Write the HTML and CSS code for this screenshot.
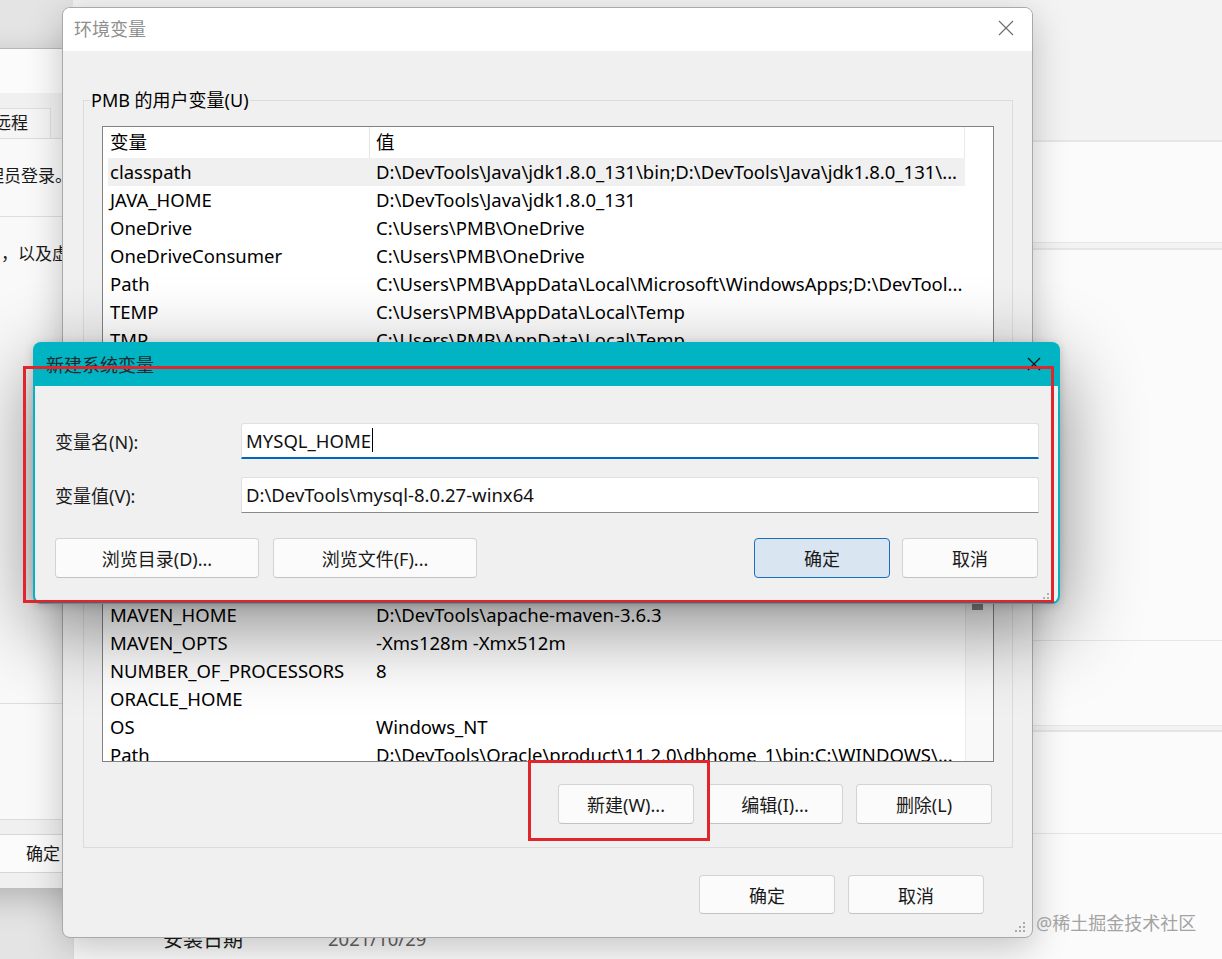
FILE: index.html
```html
<!DOCTYPE html>
<html lang="zh-CN">
<head>
<meta charset="utf-8">
<title>环境变量</title>
<link rel="stylesheet" href="styles.css">
</head>
<body>
<div class="settings">
  <div class="set-head"></div>
  <div class="set-card card-a"></div>
  <div class="set-card card-b"><div class="set-b1"></div></div>
  <div class="set-card card-c">
    <div class="set-c1"></div>
    <div class="spec">
      <div class="spec-row"></div>
      <div class="spec-row"></div>
      <div class="spec-row"><span class="spec-k">安装日期</span><span class="spec-v">2021/10/29</span></div>
    </div>
  </div>
</div>

<div class="sysprop">
  <div class="sp-title"></div>
  <div class="sp-body">
    <div class="sp-tabs"><span class="sp-tab">远程</span></div>
    <div class="sp-panel">
      <p class="sp-note">要进行大多数更改，你必须作为管理员登录。</p>
      <div class="sp-group">
        <p class="sp-text">视觉效果，处理器计划，内存使用，以及虚拟内存</p>
      </div>
    </div>
    <div class="sp-buttons"><span class="sp-btn">确定</span></div>
  </div>
</div>

<div class="env">
  <div class="env-title">
    <span class="env-title-text">环境变量</span>
    <svg class="env-close" width="16" height="16" viewBox="0 0 16 16"><path d="M1 1L15 15M15 1L1 15" stroke="#6b6b6b" stroke-width="1.1" fill="none"/></svg>
  </div>
  <div class="env-body">
    <div class="group g-user">
      <div class="legend">PMB 的用户变量(U)</div>
      <div class="list l-user">
        <div class="lv-main">
          <div class="lv-head"><span class="c1">变量</span><span class="c2">值</span></div>
          <div class="lv-row sel"><span class="c1">classpath</span><span class="c2">D:\DevTools\Java\jdk1.8.0_131\bin;D:\DevTools\Java\jdk1.8.0_131\...</span></div>
          <div class="lv-row"><span class="c1">JAVA_HOME</span><span class="c2">D:\DevTools\Java\jdk1.8.0_131</span></div>
          <div class="lv-row"><span class="c1">OneDrive</span><span class="c2">C:\Users\PMB\OneDrive</span></div>
          <div class="lv-row"><span class="c1">OneDriveConsumer</span><span class="c2">C:\Users\PMB\OneDrive</span></div>
          <div class="lv-row"><span class="c1">Path</span><span class="c2">C:\Users\PMB\AppData\Local\Microsoft\WindowsApps;D:\DevTool...</span></div>
          <div class="lv-row"><span class="c1">TEMP</span><span class="c2">C:\Users\PMB\AppData\Local\Temp</span></div>
          <div class="lv-row"><span class="c1">TMP</span><span class="c2">C:\Users\PMB\AppData\Local\Temp</span></div>
        </div>
        <div class="lv-side"></div>
      </div>
    </div>
    <div class="group g-sys">
      <div class="list l-sys">
        <div class="lv-main">
          <div class="lv-scrolled"></div>
          <div class="lv-row"><span class="c1">MAVEN_HOME</span><span class="c2">D:\DevTools\apache-maven-3.6.3</span></div>
          <div class="lv-row"><span class="c1">MAVEN_OPTS</span><span class="c2">-Xms128m -Xmx512m</span></div>
          <div class="lv-row"><span class="c1">NUMBER_OF_PROCESSORS</span><span class="c2">8</span></div>
          <div class="lv-row"><span class="c1">ORACLE_HOME</span><span class="c2"></span></div>
          <div class="lv-row"><span class="c1">OS</span><span class="c2">Windows_NT</span></div>
          <div class="lv-row"><span class="c1">Path</span><span class="c2">D:\DevTools\Oracle\product\11.2.0\dbhome_1\bin;C:\WINDOWS\...</span></div>
        </div>
        <div class="lv-side sb"><div class="thumb"></div></div>
      </div>
      <div class="btn-row">
        <span class="wbtn w136">新建(W)...</span>
        <span class="wbtn w136">编辑(I)...</span>
        <span class="wbtn w136">删除(L)</span>
      </div>
    </div>
    <div class="foot">
      <span class="wbtn w136 h39">确定</span>
      <span class="wbtn w136 h39">取消</span>
    </div>
  </div>
  <svg class="grip env-grip" width="12" height="12" viewBox="0 0 12 12"><g fill="#a9a9a9"><rect x="9" y="1" width="2" height="2"/><rect x="5" y="5" width="2" height="2"/><rect x="9" y="5" width="2" height="2"/><rect x="1" y="9" width="2" height="2"/><rect x="5" y="9" width="2" height="2"/><rect x="9" y="9" width="2" height="2"/></g></svg>
</div>

<div class="newvar">
  <div class="nv-title">
    <span class="nv-title-text">新建系统变量</span>
    <svg class="nv-close" width="14" height="14" viewBox="0 0 14 14"><path d="M1 1L13 13M13 1L1 13" stroke="#111" stroke-width="1.2" fill="none"/></svg>
  </div>
  <div class="nv-body">
    <div class="nv-row">
      <span class="nv-label">变量名(N):</span>
      <div class="nv-input focus"><span>MYSQL_HOME</span><span class="caret"></span></div>
    </div>
    <div class="nv-row">
      <span class="nv-label">变量值(V):</span>
      <div class="nv-input"><span>D:\DevTools\mysql-8.0.27-winx64</span></div>
    </div>
    <div class="nv-btns">
      <span class="wbtn w204">浏览目录(D)...</span>
      <span class="wbtn w204">浏览文件(F)...</span>
      <span class="nv-spacer"></span>
      <span class="wbtn w136 default">确定</span>
      <span class="wbtn w136">取消</span>
    </div>
  </div>
  <svg class="grip nv-grip" width="12" height="12" viewBox="0 0 12 12"><g fill="#b0b0b0"><rect x="9" y="1" width="2" height="2"/><rect x="5" y="5" width="2" height="2"/><rect x="9" y="5" width="2" height="2"/><rect x="1" y="9" width="2" height="2"/><rect x="5" y="9" width="2" height="2"/><rect x="9" y="9" width="2" height="2"/></g></svg>
</div>

<div class="mark mark-dialog"></div>
<div class="mark mark-btn"></div>

<div class="watermark">@稀土掘金技术社区</div>
</body>
</html>
```

FILE: styles.css
```css
* { box-sizing: border-box; }
html, body { margin: 0; padding: 0; }
body {
  width: 1222px;
  height: 959px;
  overflow: hidden;
  position: relative;
  background: #e4e4e4;
  font-family: "Noto Sans", "Noto Sans CJK SC", sans-serif;
  font-size: 18px;
  color: #000;
}
p { margin: 0; }

/* ---------- settings window behind ---------- */
.settings {
  position: absolute;
  left: 73px;
  top: 0;
  width: 1200px;
  height: 959px;
  background: #f3f3f3;
  display: flex;
  flex-direction: column;
}
.set-head { height: 140px; flex: none; }
.set-card {
  flex: none;
  background: #fbfbfb;
  border-top: 2px solid #e6e6e6;
  border-left: 1px solid #dedede;
}
.card-a { height: 103px; border-bottom: 1px solid #e6e6e6; }
.card-b { height: 478px; margin-top: 5px; border-bottom: 1px solid #e6e6e6; }
.set-b1 { height: 391px; border-bottom: 1px solid #e6e6e6; }
.card-c { flex: 1; margin-top: 4px; }
.set-c1 { height: 102px; border-bottom: 1px solid #e6e6e6; }
.spec { padding: 14px 0 0 89px; }
.spec-row { display: flex; align-items: center; height: 36px; }
.spec-k { width: 165px; color: #1b1b1b; font-size: 20px; }
.spec-v { color: #606060; font-size: 18.5px; }

/* ---------- system properties window behind (left) ---------- */
.sysprop {
  position: absolute;
  left: -303px;
  top: 48px;
  width: 420px;
  height: 840px;
  background: #f0f0f0;
  border-top: 1px solid #b8b8b8;
  box-shadow: 0 10px 30px rgba(0,0,0,0.22);
  font-size: 17px;
  color: #1a1a1a;
}
.sp-title { height: 44px; background: #fbfbfb; }
.sp-body { padding: 15px 0 14px 10px; }
.sp-tabs {
  display: flex;
  justify-content: flex-end;
  height: 30px;
  padding-right: 66px;
}
.sp-tab {
  height: 30px;
  line-height: 28px;
  padding: 0 22px;
  background: #f5f5f5;
  border: 1px solid #dedede;
  border-bottom: none;
  white-space: nowrap;
}
.sp-panel {
  height: 682px;
  background: #f9f9f9;
  border: 1px solid #dcdcdc;
  padding: 24px 0 0 24px;
}
.sp-note { line-height: 26px; white-space: nowrap; }
.sp-group {
  margin-top: 27px;
  margin-left: -4px;
  height: 488px;
  border-top: 1px solid #dedede;
  border-bottom: 1px solid #dedede;
  padding: 24px 0 0 18px;
}
.sp-text { line-height: 26px; white-space: nowrap; }
.sp-buttons {
  display: flex;
  gap: 12px;
  margin-top: 14px;
  padding-left: 268px;
}
.sp-btn {
  flex: none;
  width: 136px;
  height: 39px;
  line-height: 37px;
  text-align: center;
  background: #fbfbfb;
  border: 1px solid #d6d6d6;
  border-radius: 4px;
}

/* ---------- environment variables dialog ---------- */
.env {
  position: absolute;
  left: 62px;
  top: 7px;
  width: 971px;
  height: 931px;
  background: #f0f0f0;
  border: 1px solid #a9a9a9;
  border-radius: 8px;
  box-shadow: 0 10px 36px rgba(0,0,0,0.22);
  overflow: hidden;
}
.env-title {
  height: 43px;
  background: #fff;
  display: flex;
  align-items: center;
  padding: 0 0 4px 11px;
}
.env-title-text { color: #8f8f8f; font-size: 18px; flex: 1; }
.env-close { margin-right: 18px; }
.env-body { padding: 49px 19px 0 20px; }

.group {
  border: 1px solid #dcdcdc;
  padding: 0 18px 23px 18px;
}
.g-user { padding-bottom: 85px; }
.g-sys { margin-top: 6px; padding-top: 25px; }
.legend {
  width: fit-content;
  margin: -14px 0 0 -12px;
  height: 26px;
  line-height: 26px;
  padding: 0 1px;
  background: #f0f0f0;
  white-space: nowrap;
}
.list {
  margin-top: 13px;
  border: 1px solid #828282;
  background: #fff;
  display: flex;
  overflow: hidden;
  font-size: 18.5px;
}
.g-sys .list { margin-top: 0; }
.l-user { height: 241px; }
.l-sys { height: 277px; }
.lv-main { width: 862px; flex: none; padding-left: 5px; }
.lv-side { flex: 1; }
.lv-scrolled { height: 115px; }
.sb { background: #f9f9f9; border-left: 1px solid #ebebeb; padding: 30px 0 0 6px; }
.thumb { width: 11px; height: 94px; background: #878787; }
.lv-head { display: flex; height: 31px; line-height: 30px; background: #fff; }
.lv-head .c1 { border-right: 1px solid #e5e5e5; }
.lv-head .c2 { border-right: 1px solid #e9e9e9; }
.lv-row { display: flex; height: 28px; line-height: 28px; }
.lv-row.sel { background: #f0f0f0; }
.c1 { width: 262px; flex: none; padding-left: 2px; white-space: nowrap; overflow: hidden; }
.c2 { flex: 1; padding-left: 6px; white-space: nowrap; overflow: hidden; }

.btn-row {
  display: flex;
  justify-content: flex-end;
  gap: 13px;
  margin: 22px 2px 0 0;
}
.wbtn {
  flex: none;
  height: 40px;
  display: flex;
  align-items: center;
  justify-content: center;
  background: #fbfbfb;
  border: 1px solid #d3d3d3;
  border-bottom-color: #c2c2c2;
  border-radius: 4px;
  color: #1a1a1a;
  white-space: nowrap;
}
.w136 { width: 136px; }
.w204 { width: 204px; }
.h39 { height: 39px; }
.foot {
  display: flex;
  justify-content: flex-end;
  gap: 13px;
  margin: 27px 29px 0 0;
}
.grip { position: absolute; }
.env-grip { right: 6px; bottom: 4px; }

/* ---------- new system variable dialog ---------- */
.newvar {
  position: absolute;
  left: 33px;
  top: 342px;
  width: 1027px;
  height: 262px;
  background: #00b4c3;
  border-radius: 8px;
  padding: 0 2px 2px 2px;
  display: flex;
  flex-direction: column;
  box-shadow: 0 24px 80px rgba(0,0,0,0.46), 0 2px 10px rgba(0,0,0,0.16);
}
.nv-title {
  height: 44px;
  flex: none;
  display: flex;
  align-items: center;
  padding-left: 11px;
}
.nv-title-text { flex: 1; color: #1e2a2c; font-size: 18px; }
.nv-close { margin-right: 17px; }
.nv-body {
  flex: 1;
  background: #f0f0f0;
  border-radius: 0 0 6px 6px;
  padding: 37px 19px 0 20px;
}
.nv-row { display: flex; align-items: center; height: 36px; }
.nv-row + .nv-row { margin-top: 18px; }
.nv-label { width: 186px; flex: none; color: #1a1a1a; }
.nv-input {
  flex: 1;
  height: 36px;
  background: #fff;
  border: 1px solid #e0e0e0;
  border-bottom: 1px solid #8a8a8a;
  border-radius: 3px 3px 0 0;
  display: flex;
  align-items: center;
  padding: 0 0 2px 4px;
  color: #111;
  font-size: 18.5px;
}
.nv-input.focus { border-bottom: 2px solid #0067c0; padding-bottom: 1px; }
.caret { width: 1px; height: 24px; background: #000; margin-left: 1px; }
.nv-btns { display: flex; gap: 14px; margin-top: 25px; padding-right: 1px; }
.nv-btns .default + .wbtn { margin-left: -2px; }
.nv-spacer { flex: 1; }
.wbtn.default { background: #d9e6f2; border: 1px solid #1a6fc0; }
.nv-grip { right: 6px; bottom: 4px; }

/* ---------- red annotation boxes ---------- */
.mark {
  position: absolute;
  border: 3px solid #e0252d;
}
.mark-dialog { left: 23px; top: 366px; width: 1031px; height: 237px; }
.mark-btn { left: 528px; top: 760px; width: 182px; height: 81px; }

.watermark {
  position: absolute;
  left: 1036px;
  top: 909px;
  font-size: 18px;
  line-height: 28px;
  color: #a3a3a3;
  white-space: nowrap;
}
```
